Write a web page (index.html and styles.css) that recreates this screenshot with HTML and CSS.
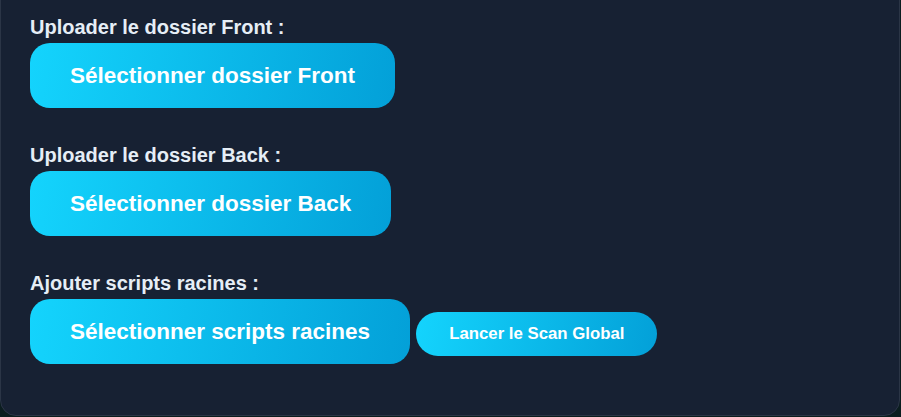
FILE: index.html
```html
<!DOCTYPE html>
<html lang="fr">
<head>
    <meta charset="UTF-8">
    <meta name="viewport" content="width=device-width, initial-scale=1.0">
    <title>Scan Global</title>
    <link rel="stylesheet" href="styles.css">
</head>
<body>

<div class="panel">
    <div class="upload-group">
        <label class="upload-label">Uploader le dossier Front :</label>
        <button class="btn">Sélectionner dossier Front</button>
    </div>

    <div class="upload-group">
        <label class="upload-label">Uploader le dossier Back :</label>
        <button class="btn">Sélectionner dossier Back</button>
    </div>

    <div class="upload-group">
        <label class="upload-label">Ajouter scripts racines :</label>
        <div class="btn-row">
            <button class="btn">Sélectionner scripts racines</button>
            <button class="btn btn-small">Lancer le Scan Global</button>
        </div>
    </div>
</div>

</body>
</html>
```

FILE: styles.css
```css
* { margin: 0; padding: 0; box-sizing: border-box; font-family: 'Liberation Sans', Arial, sans-serif; }

body { background-color: #0b1d1f; overflow: hidden; height: 100vh; }

.panel { width: 900px; margin-top: -20px; padding: 35px 29px 51px; background-color: #172133;
         border: 1px solid #2b3546; border-radius: 16px; }

.upload-group { margin-bottom: 36px; }
.upload-group:last-child { margin-bottom: 0; }

.upload-label { display: block; color: #e6eef6; font-size: 20px; font-weight: bold; line-height: 22px; margin-bottom: 5px; }

.btn { display: inline-block; border: none; cursor: pointer; color: #ffffff; font-size: 22.5px; font-weight: bold;
       line-height: 25px; padding: 20px 40px; border-radius: 20px;
       background: linear-gradient(100deg, #14d4fd 0%, #03a0d8 100%); }

.btn-row { display: flex; align-items: center; gap: 6px; }

.btn-small { font-size: 16.8px; line-height: 18px; padding: 13px 33px; border-radius: 22px; margin-top: 5px; }
```
